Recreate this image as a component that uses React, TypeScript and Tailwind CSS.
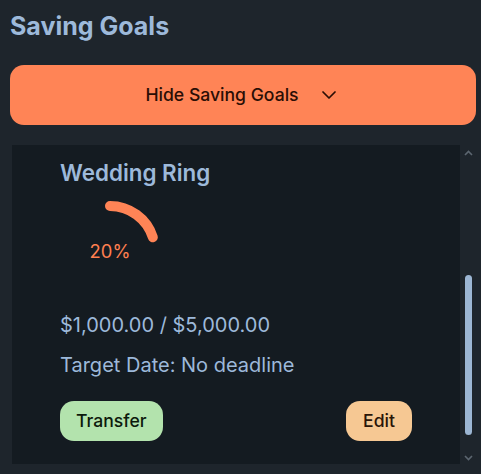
import { ChevronDown } from "lucide-react";

type Goal = { name: string; saved: string; target: string; pct: number; date: string };

const goals: Goal[] = [
  { name: "Wedding Ring", saved: "$1,000.00", target: "$5,000.00", pct: 20, date: "No deadline" },
];

function Ring({ pct }: { pct: number }) {
  const r = 45;
  const c = 2 * Math.PI * r;
  return (
    <div className="relative mt-[14px] h-[100px] w-[100px]">
      <svg width="100" height="100" viewBox="0 0 100 100" className="block -rotate-90">
        <circle
          cx="50"
          cy="50"
          r={r}
          fill="none"
          stroke="#ff8456"
          strokeWidth="10"
          strokeLinecap="round"
          strokeDasharray={`${(c * pct) / 100} ${c}`}
        />
      </svg>
      <div className="absolute inset-0 flex items-center justify-center text-[18.4px] leading-7 text-[#ff7f50]">
        {pct}%
      </div>
    </div>
  );
}

function GoalItem({ g }: { g: Goal }) {
  return (
    <div className="flex flex-col pt-[14px] pb-[23px]">
      <h3 className="text-[22.4px] font-semibold leading-7 text-[#9db9da]">{g.name}</h3>
      <Ring pct={g.pct} />
      <p className="mt-[10px] text-[20px] leading-7 text-[#9db9da]">
        {g.saved} / {g.target}
      </p>
      <p className="mt-[12px] text-[20px] leading-7 text-[#9db9da]">Target Date: {g.date}</p>
      <div className="mt-[22px] flex items-center justify-between">
        <button className="h-10 rounded-[14px] bg-[#b3e3ad] px-[16px] text-[17.6px] font-medium text-[#0d1a0c]">
          Transfer
        </button>
        <button className="h-10 rounded-[14px] bg-[#f6c893] px-[17px] text-[17.6px] font-medium text-[#2a1508]">
          Edit
        </button>
      </div>
    </div>
  );
}

function FakeScrollbar() {
  return (
    <div className="relative flex w-[15px] shrink-0 flex-col items-center">
      <svg width="9" height="6" viewBox="0 0 9 6" className="mt-[7px]">
        <path d="M1 5 L4.5 1.5 L8 5" fill="none" stroke="#5c6670" strokeWidth="1.6" />
      </svg>
      <div className="mt-[119px] h-[160px] w-[7px] rounded-full bg-[#9cb6d3]" />
      <svg width="9" height="6" viewBox="0 0 9 6" className="mt-[20px]">
        <path d="M1 1 L4.5 4.5 L8 1" fill="none" stroke="#5c6670" strokeWidth="1.6" />
      </svg>
    </div>
  );
}

export default function App() {
  return (
    <div
      className="min-h-screen bg-[#1e252c] pl-[10px] pr-[5px] pt-[10px]"
      style={{ fontFamily: "Inter, 'Noto Sans', sans-serif" }}
    >
      <h2 className="text-[25px] font-bold leading-8 text-[#9db9da]">Saving Goals</h2>
      <button className="mt-[23px] flex h-[60px] w-full items-center justify-center gap-[18px] rounded-[14px] bg-[#ff8456] text-[17.6px] font-medium text-[#2a0e05]">
        <span>Hide Saving Goals</span>
        <ChevronDown size={24} strokeWidth={1.75} />
      </button>
      <div className="mt-[18px] flex h-[323px]">
        <div className="min-w-0 flex-1 overflow-hidden py-[2px] pl-[2px] pr-[1px]">
          <div className="bg-[#141b21] px-12">
            {goals.map((g) => (
              <GoalItem key={g.name} g={g} />
            ))}
          </div>
        </div>
        <FakeScrollbar />
      </div>
    </div>
  );
}
